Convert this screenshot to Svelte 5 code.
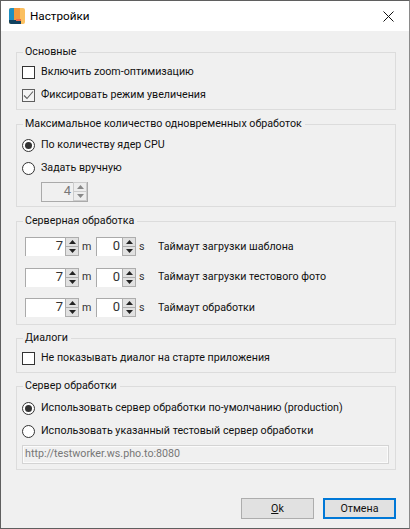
<script>
	const timeouts = ['Таймаут загрузки шаблона', 'Таймаут загрузки тестового фото', 'Таймаут обработки'];
</script>

{#snippet spin(value, cls)}
	<div class="spin {cls}">
		<span class="value">{value}</span>
		<div class="arrows">
			<span class="arrow"><svg width="7" height="4" viewBox="0 0 7 4"><path d="M3.5 0 7 4H0z" /></svg></span>
			<span class="arrow"><svg width="7" height="4" viewBox="0 0 7 4"><path d="M0 0h7L3.5 4z" /></svg></span>
		</div>
	</div>
{/snippet}

{#snippet check(checked, label)}
	<div class="row">
		<span class="box" class:on={checked}>
			{#if checked}
				<svg width="11" height="11" viewBox="0 0 11 11"><path d="M1 5.5 4 8.5 10 1.5" fill="none" stroke="#5f5f5f" stroke-width="1.1" /></svg>
			{/if}
		</span>
		<span>{label}</span>
	</div>
{/snippet}

{#snippet radio(checked, label)}
	<div class="row">
		<span class="radio">{#if checked}<span class="dot"></span>{/if}</span>
		<span>{label}</span>
	</div>
{/snippet}

<div class="window">
	<header class="title">
		<svg class="logo" width="16" height="16" viewBox="0 0 16 16">
			<rect width="16" height="16" rx="2" fill="#fbc060" />
			<path d="M0 2a2 2 0 0 1 2-2h3v13H0z" fill="#1f8fc0" />
			<rect x="5" width="6" height="12" fill="#f29a3e" />
			<path d="M0 12h12v4H2a2 2 0 0 1-2-2z" fill="#12425f" />
			<rect x="7" y="11" width="5" height="2" fill="#ef6a4a" />
		</svg>
		<span class="title-text">Настройки</span>
		<svg class="close" width="11" height="11" viewBox="0 0 11 11"><path d="M.5.5l10 10M10.5.5l-10 10" stroke="#111" fill="none" /></svg>
	</header>

	<main class="content">
		<fieldset class="first">
			<legend>Основные</legend>
			{@render check(false, 'Включить zoom-оптимизацию')}
			{@render check(true, 'Фиксировать режим увеличения')}
		</fieldset>

		<fieldset class="cores">
			<legend>Максимальное количество одновременных обработок</legend>
			{@render radio(true, 'По количеству ядер CPU')}
			{@render radio(false, 'Задать вручную')}
			{@render spin(4, 'disabled')}
		</fieldset>

		<fieldset class="server">
			<legend>Серверная обработка</legend>
			{#each timeouts as label}
				<div class="timeout">
					{@render spin(7, 'minutes')}
					<span class="unit">m</span>
					{@render spin(0, 'seconds')}
					<span class="unit">s</span>
					<span class="timeout-label">{label}</span>
				</div>
			{/each}
		</fieldset>

		<fieldset class="dialogs">
			<legend>Диалоги</legend>
			{@render check(false, 'Не показывать диалог на старте приложения')}
		</fieldset>

		<fieldset class="worker">
			<legend>Сервер обработки</legend>
			{@render radio(true, 'Использовать сервер обработки по-умолчанию (production)')}
			{@render radio(false, 'Использовать указанный тестовый сервер обработки')}
			<div class="url">http://testworker.ws.pho.to:8080</div>
		</fieldset>

		<footer class="buttons">
			<button class="btn"><u>O</u>k</button>
			<button class="btn active">Отмена</button>
		</footer>
	</main>
</div>

<style>
	:global(body) {
		margin: 0;
		background: #f0f0f0;
	}

	.window {
		width: 410px;
		height: 529px;
		box-sizing: border-box;
		border: 1px solid #5f5f5f;
		border-right-color: #8a8a8a;
		display: flex;
		flex-direction: column;
		background: #f0f0f0;
		color: #111;
		font-family: Roboto, "Noto Sans", sans-serif;
		font-size: 10.7px;
		line-height: 16px;
	}

	.title {
		height: 30px;
		flex: none;
		background: #fff;
		display: flex;
		align-items: center;
		padding: 0 15px 0 8px;
	}

	.logo {
		margin-right: 5px;
	}

	.title-text {
		color: #000;
		font-size: 11.7px;
		flex: 1;
	}

	.content {
		flex: 1;
		display: flex;
		flex-direction: column;
		padding: 13px 13px 0 15px;
	}

	fieldset {
		box-sizing: border-box;
		margin: 0 0 6px;
		padding: 0 0 0 5px;
		border: 1px solid #dcdcdc;
		display: flex;
		flex-direction: column;
		min-width: 0;
	}

	legend {
		padding: 0 3px 0 2px;
		margin-left: 1px;
	}

	.first {
		height: 66px;
		padding-top: 4px;
		gap: 7px;
	}

	.cores {
		height: 91px;
		padding-top: 5px;
		gap: 7px;
	}

	.server {
		height: 112px;
		padding-left: 8px;
		padding-top: 8px;
		gap: 11.5px;
		margin-bottom: 5px;
	}

	.server legend {
		margin-left: -2px;
	}

	.dialogs {
		height: 43px;
		padding-top: 4px;
		margin-bottom: 5px;
	}

	.worker {
		height: 92px;
		padding-top: 6px;
		gap: 7px;
	}

	.row {
		display: flex;
		align-items: center;
		gap: 6px;
		height: 16px;
	}

	.box {
		width: 11px;
		height: 11px;
		border: 1px solid #333;
		background: #fff;
		flex: none;
		display: flex;
		align-items: center;
		justify-content: center;
	}

	.box.on {
		background: #f4f4f4;
		border-color: #5f5f5f;
	}

	.radio {
		width: 11px;
		height: 11px;
		border: 1px solid #333;
		border-radius: 50%;
		background: #fff;
		flex: none;
		display: flex;
		align-items: center;
		justify-content: center;
	}

	.dot {
		width: 7px;
		height: 7px;
		border-radius: 50%;
		background: #333;
	}

	.spin {
		display: flex;
		height: 19px;
		box-sizing: border-box;
		border-top: 1px solid #aaa;
		border-left: 1px solid #aaa;
		background: #fff;
		flex: none;
		font-size: 13px;
		color: #333;
	}

	.value {
		flex: 1;
		text-align: right;
		padding-right: 2px;
	}

	.arrows {
		width: 14px;
		display: flex;
		flex-direction: column;
		margin-top: -1px;
	}

	.arrow {
		flex: 1;
		box-sizing: border-box;
		background: #e1e1e1;
		border: 1px solid #adadad;
		display: flex;
		align-items: center;
		justify-content: center;
	}

	.arrow + .arrow {
		border-top: none;
	}

	.arrow path {
		fill: #222;
	}

	.minutes {
		width: 54px;
	}

	.seconds {
		width: 40px;
	}

	.disabled {
		width: 47px;
		height: 20px;
		margin: -1px 0 0 19px;
		background: #f0f0f0;
		border: 1px solid #aaa;
		color: #777;
	}

	.disabled .arrow {
		border-color: #ccc;
		background: #ededed;
	}

	.disabled .arrow path {
		fill: #888;
	}

	.timeout {
		display: flex;
		align-items: center;
		gap: 3px;
	}

	.unit {
		width: 11px;
		color: #333;
	}

	.seconds + .unit {
		width: 8px;
	}

	.timeout-label {
		margin-left: 8px;
	}

	.url {
		box-sizing: border-box;
		width: 367px;
		height: 19px;
		border: 1px solid #d4d4d4;
		box-shadow: inset 0 0 0 1px #fbfbfb;
		color: #777;
		padding-left: 2px;
		margin-top: -1px;
	}

	.buttons {
		display: flex;
		justify-content: flex-end;
		gap: 9px;
		margin-top: 22px;
	}

	.btn {
		width: 73px;
		height: 21px;
		box-sizing: border-box;
		border: 1px solid #adadad;
		background: #e1e1e1;
		font: inherit;
		padding: 0;
		color: #111;
	}

	.active {
		border: 2px solid #0078d7;
	}
</style>
